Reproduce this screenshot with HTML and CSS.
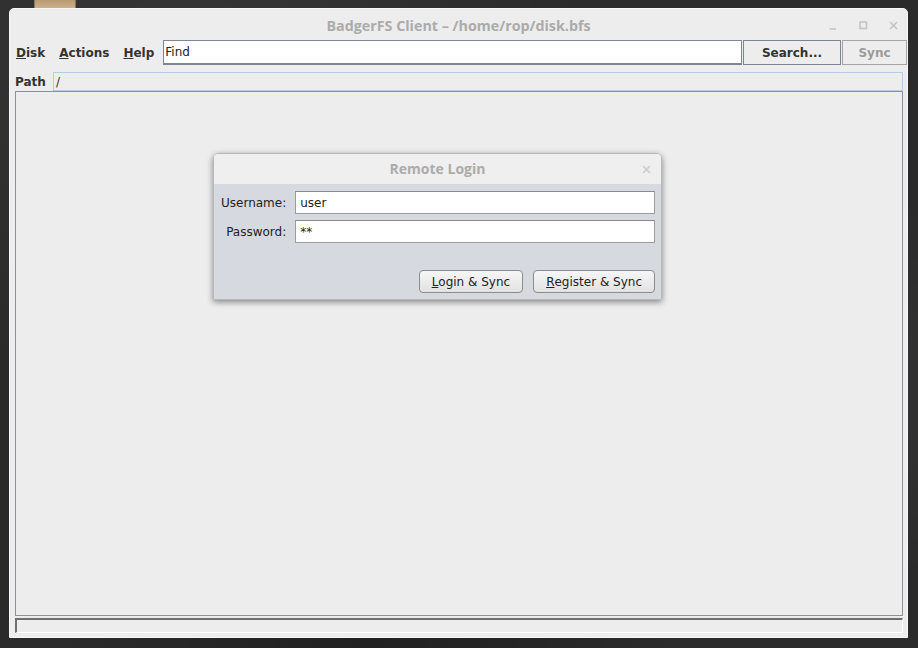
FILE: index.html
```html
<!DOCTYPE html>
<html>
<head>
<meta charset="utf-8">
<title>BadgerFS Client</title>
<link rel="stylesheet" href="styles.css">
</head>
<body>
<div class="desktop">
  <div class="dock-tab"></div>
  <div class="window">
    <div class="titlebar">
      <div class="title">BadgerFS Client – /home/rop/disk.bfs</div>
      <div class="wm-buttons">
        <svg class="wm-icon" width="9" height="9" viewBox="0 0 9 9"><line x1="0.5" y1="8" x2="7" y2="8"/></svg>
        <svg class="wm-icon" width="9" height="9" viewBox="0 0 9 9"><rect x="1" y="1" width="6.5" height="6.5"/></svg>
        <svg class="wm-icon" width="9" height="9" viewBox="0 0 9 9"><line x1="1" y1="1" x2="8" y2="8"/><line x1="8" y1="1" x2="1" y2="8"/></svg>
      </div>
    </div>
    <div class="toolbar">
      <div class="menus">
        <span class="menu"><u>D</u>isk</span>
        <span class="menu"><u>A</u>ctions</span>
        <span class="menu"><u>H</u>elp</span>
      </div>
      <div class="find">Find</div>
      <div class="tool-btn search">Search...</div>
      <div class="tool-btn sync">Sync</div>
    </div>
    <div class="pathrow">
      <span class="path-label">Path</span>
      <div class="path-field">/</div>
    </div>
    <div class="main-panel"></div>
    <div class="status"></div>

    <div class="dialog">
      <div class="dlg-title">
        <span class="dlg-title-text">Remote Login</span>
        <svg class="dlg-close" width="9" height="9" viewBox="0 0 9 9"><line x1="1" y1="1" x2="8" y2="8"/><line x1="8" y1="1" x2="1" y2="8"/></svg>
      </div>
      <div class="dlg-body">
        <div class="form">
          <label class="lbl">Username:</label>
          <div class="input">user</div>
          <label class="lbl">Password:</label>
          <div class="input">**</div>
        </div>
        <div class="dlg-actions">
          <div class="btn"><u>L</u>ogin &amp; Sync</div>
          <div class="btn"><u>R</u>egister &amp; Sync</div>
        </div>
      </div>
    </div>
  </div>
</div>
</body>
</html>
```

FILE: styles.css
```css
* { box-sizing: border-box; }

html, body {
  margin: 0;
  padding: 0;
  width: 918px;
  height: 648px;
  overflow: hidden;
}

body {
  background-color: #2b2b2b;
  background-image:
    radial-gradient(ellipse at 20% 10%, rgba(255,255,255,0.05), transparent 40%),
    radial-gradient(ellipse at 90% 60%, rgba(255,255,255,0.04), transparent 35%),
    radial-gradient(ellipse at 40% 95%, rgba(0,0,0,0.25), transparent 40%);
  font-family: "DejaVu Sans", sans-serif;
  font-size: 12px;
  color: #222;
}

.desktop {
  position: relative;
  width: 918px;
  height: 648px;
  padding: 8px 0 0 9px;
}

.dock-tab {
  position: absolute;
  left: 34px;
  top: 0;
  width: 42px;
  height: 8px;
  background: linear-gradient(#b79a70, #cdb08a);
  border-left: 1px solid #8a7454;
  border-right: 1px solid #8a7454;
}

.window {
  position: relative;
  width: 899px;
  height: 630px;
  background: #ededed;
  border: 1px solid #f7f7f7;
  border-radius: 5px 5px 0 0;
  display: flex;
  flex-direction: column;
}

/* title bar */
.titlebar {
  height: 31px;
  display: grid;
  grid-template-columns: 1fr auto 1fr;
  align-items: center;
  flex: none;
}
.title {
  grid-column: 2;
  font-family: "Open Sans", sans-serif;
  font-weight: 700;
  font-size: 14.3px;
  color: #ababab;
  padding-top: 1px;
}
.wm-buttons {
  grid-column: 3;
  justify-self: end;
  display: flex;
  gap: 21px;
  padding-right: 9px;
  padding-top: 2px;
}
.wm-icon {
  display: block;
  fill: none;
  stroke: #c4c4c4;
  stroke-width: 1.6;
}

/* toolbar */
.toolbar {
  height: 25px;
  display: flex;
  align-items: stretch;
  padding-left: 6px;
  flex: none;
}
.menus {
  display: flex;
  align-items: center;
  gap: 14px;
  margin-right: 9px;
  font-weight: 700;
  color: #333;
}
.menu u { text-decoration-thickness: 1px; }
.find {
  flex: 1;
  background: #fff;
  border: 1px solid #7c8694;
  border-bottom-width: 2px;
  display: flex;
  align-items: center;
  padding-left: 1px;
  color: #222;
}
.tool-btn {
  display: flex;
  align-items: center;
  justify-content: center;
  font-weight: 700;
  background: #ededed;
  margin-left: 1px;
}
.search {
  width: 98px;
  border: 1px solid #7c8594;
  color: #333;
}
.sync {
  width: 65px;
  border: 1px solid #a4a4a4;
  color: #9a9a9a;
}

/* path row */
.pathrow {
  margin-top: 7px;
  height: 19px;
  display: flex;
  align-items: stretch;
  padding: 0 4px 0 5px;
  flex: none;
}
.path-label {
  font-weight: 700;
  color: #333;
  width: 38px;
  display: flex;
  align-items: center;
  padding-top: 1px;
}
.path-field {
  flex: 1;
  border: 1px solid #b6cde5;
  display: flex;
  align-items: center;
  padding-left: 2px;
  color: #333;
}

/* main area */
.main-panel {
  flex: 1;
  margin: 0 4px 0 5px;
  border: 1px solid #8891a0;
  background: #ededed;
}
.status {
  height: 15px;
  margin: 2px 4px 4px 5px;
  border-top: 2px solid #6e6e6e;
  border-left: 2px solid #6e6e6e;
  border-bottom: 1px solid #ffffff;
  border-right: 1px solid #ffffff;
  flex: none;
}

/* dialog */
.dialog {
  position: absolute;
  left: 203px;
  top: 144px;
  width: 449px;
  height: 147px;
  border: 1px solid #b8b8b8;
  border-radius: 5px 5px 0 0;
  box-shadow: 0 2px 6px rgba(0,0,0,0.45);
  display: flex;
  flex-direction: column;
  overflow: hidden;
}
.dlg-title {
  height: 30px;
  background: #efefef;
  display: grid;
  grid-template-columns: 1fr auto 1fr;
  align-items: center;
  flex: none;
}
.dlg-title-text {
  grid-column: 2;
  font-family: "Open Sans", sans-serif;
  font-weight: 700;
  font-size: 14px;
  color: #ababab;
  padding-bottom: 1px;
}
.dlg-close {
  grid-column: 3;
  justify-self: end;
  margin-right: 10px;
  fill: none;
  stroke: #cdcdcd;
  stroke-width: 1.6;
}
.dlg-body {
  flex: 1;
  background: #d6d9df;
  padding: 7px 6px 6px 7px;
  display: flex;
  flex-direction: column;
}
.form {
  display: grid;
  grid-template-columns: auto 1fr;
  column-gap: 9px;
  row-gap: 6px;
}
.lbl {
  justify-self: end;
  align-self: center;
  color: #222;
}
.input {
  height: 23px;
  background: #fff;
  border: 1px solid #9c9c9c;
  border-top-color: #8a8a8a;
  display: flex;
  align-items: center;
  padding-left: 4px;
  color: #222;
}
.dlg-actions {
  margin-top: auto;
  display: flex;
  justify-content: flex-end;
  gap: 10px;
}
.btn {
  height: 23px;
  padding: 0 12px;
  border: 1px solid #8c8c8c;
  border-radius: 4px;
  background: linear-gradient(#f6f6f6, #e2e2e2);
  display: flex;
  align-items: center;
  color: #222;
}
```
